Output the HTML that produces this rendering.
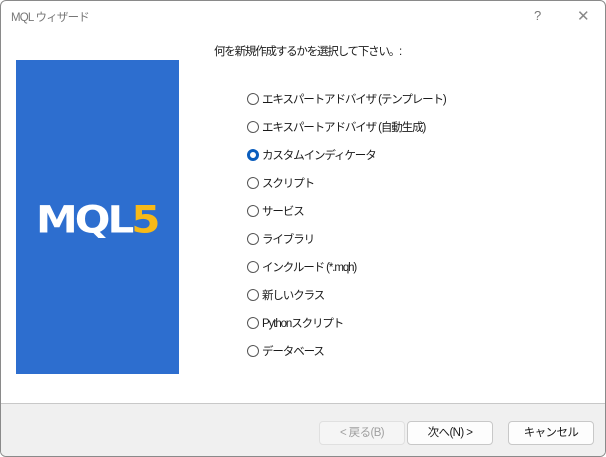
<!DOCTYPE html>
<html><head><meta charset="utf-8"><style>
body{margin:0;width:606px;height:457px;overflow:hidden;background:#fff;font-family:"Liberation Sans","Noto Sans CJK JP",sans-serif;font-size:12px;color:#1a1a1a;position:relative}
.win{position:absolute;left:0;top:0;width:604px;height:455px;border:1px solid #8a8a8a;border-radius:6px;overflow:hidden;background:#fff}
.t{position:absolute;white-space:nowrap}
.panel{position:absolute;left:15px;top:59px;width:163px;height:314px;background:#2d6ecf}
.logo{position:absolute;left:35px;top:194px;font-size:42px;font-weight:900;color:#fff;letter-spacing:-3px;font-family:"DejaVu Sans","Liberation Sans",sans-serif;transform:scaleY(0.88)}
.logo b{color:#f7b918}
.r{position:absolute;left:246px;width:10px;height:10px;border:1px solid #555;border-radius:50%;background:#fff}
.r.on{border:3px solid #0a5dbd;width:6px;height:6px}
.lab{position:absolute;left:261px;white-space:nowrap;font-size:11.5px;letter-spacing:-1.1px}
.foot{position:absolute;left:0;top:402px;width:606px;height:55px;background:#f0f0f0;border-top:1px solid #c8c8c8}
.btn{position:absolute;top:420px;height:22px;border:1px solid #c8c8c8;border-radius:4px;background:#fdfdfd;text-align:center;line-height:22px;font-size:11.5px;letter-spacing:-0.6px}
</style></head><body><div class="win">
<div class="t" style="left:10px;top:8px;color:#777;font-size:11.5px;letter-spacing:-0.8px">MQL ウィザード</div>
<div class="t" style="left:533px;top:7px;color:#777;font-size:13px">?</div>
<div class="t" style="left:576px;top:6px;color:#888;font-size:15px;font-weight:100">✕</div>
<div class="t" style="left:213px;top:42px;font-size:11.5px;letter-spacing:-1.2px">何を新規作成するかを選択して下さい。:</div>
<div class="panel"></div>
<div class="logo">MQL<b>5</b></div>
<div class="r" style="top:92px"></div><div class="lab" style="top:90px">エキスパートアドバイザ (テンプレート)</div>
<div class="r" style="top:120px"></div><div class="lab" style="top:118px">エキスパートアドバイザ (自動生成)</div>
<div class="r on" style="top:148px"></div><div class="lab" style="top:146px">カスタムインディケータ</div>
<div class="r" style="top:176px"></div><div class="lab" style="top:174px">スクリプト</div>
<div class="r" style="top:204px"></div><div class="lab" style="top:202px">サービス</div>
<div class="r" style="top:232px"></div><div class="lab" style="top:230px">ライブラリ</div>
<div class="r" style="top:260px"></div><div class="lab" style="top:258px">インクルード (*.mqh)</div>
<div class="r" style="top:288px"></div><div class="lab" style="top:286px">新しいクラス</div>
<div class="r" style="top:316px"></div><div class="lab" style="top:314px">Pythonスクリプト</div>
<div class="r" style="top:344px"></div><div class="lab" style="top:342px">データベース</div>
<div class="foot"></div>
<div class="btn" style="left:318px;width:84px;color:#a0a0a0;background:#f5f5f5;border-color:#e0e0e0">&lt; 戻る(B)</div>
<div class="btn" style="left:406px;width:84px">次へ(N) &gt;</div>
<div class="btn" style="left:507px;width:84px">キャンセル</div>
</div></body></html>
